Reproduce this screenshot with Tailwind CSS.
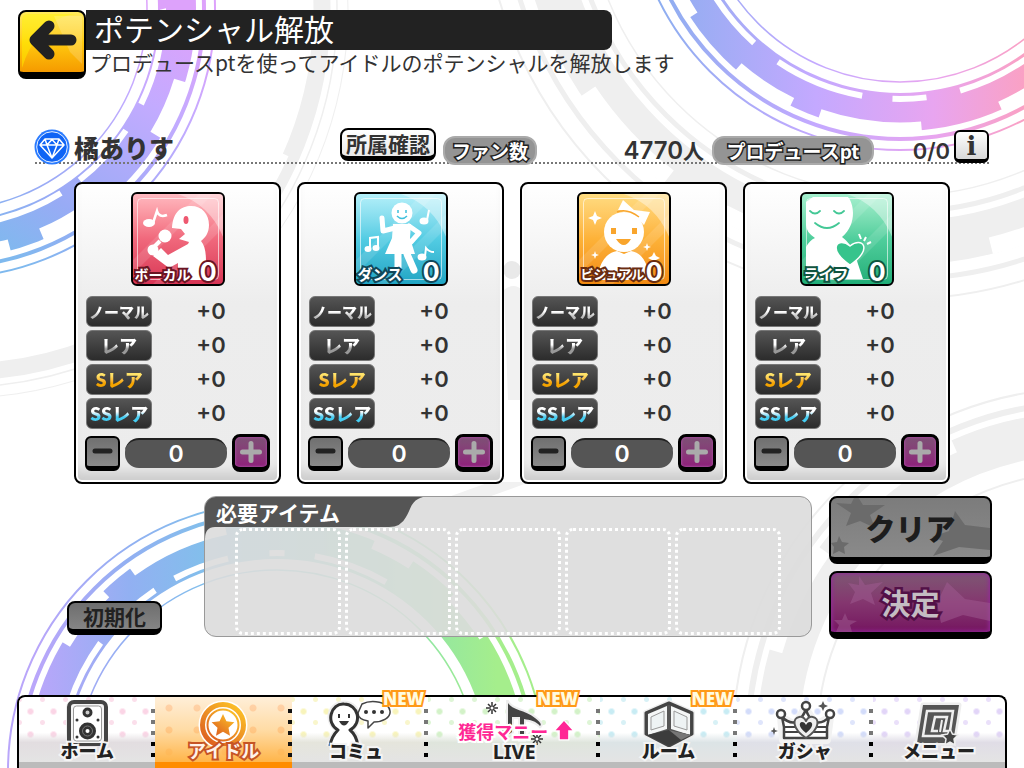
<!DOCTYPE html>
<html lang="ja">
<head>
    <meta charset="UTF-8">
    <meta name="viewport" content="width=device-width, initial-scale=1.0">
    <title>ポテンシャル解放</title>
    <script src="https://cdn.jsdelivr.net/npm/@tailwindcss/browser@4"></script>
</head>
<body class="relative flex min-h-screen flex-col overflow-hidden bg-white font-['Noto_Sans_CJK_JP',sans-serif] text-[#333]">

    <!-- Background rings -->
    <svg class="absolute inset-0 -z-0 h-full w-full" viewBox="0 0 1024 768" preserveAspectRatio="xMidYMax slice" fill="none" aria-hidden="true">
        <defs>
            <g id="ring">
                <circle r="201" stroke-width="1.5"/>
                <circle r="231" stroke-width="38"/>
                <circle r="258" stroke-width="4"/>
                <circle r="269" stroke-width="2"/>
            </g>
            <linearGradient id="gradTop" gradientUnits="userSpaceOnUse" x1="-240" y1="0" x2="150" y2="0">
                <stop offset="0" stop-color="#8eaef0"/>
                <stop offset="0.4" stop-color="#c4a9ff"/>
                <stop offset="0.7" stop-color="#e8a5f0"/>
                <stop offset="1" stop-color="#ffa0b8"/>
            </linearGradient>
            <linearGradient id="gradLeft" gradientUnits="userSpaceOnUse" x1="200" y1="-10" x2="50" y2="240">
                <stop offset="0" stop-color="#dda2fb"/>
                <stop offset="0.3" stop-color="#c3abff"/>
                <stop offset="0.75" stop-color="#98abf5"/>
                <stop offset="1" stop-color="#7fb9ee"/>
            </linearGradient>
            <linearGradient id="gradBottom" gradientUnits="userSpaceOnUse" x1="-240" y1="0" x2="220" y2="0">
                <stop offset="0" stop-color="#b9a6fa"/>
                <stop offset="0.2" stop-color="#92b0f2"/>
                <stop offset="0.4" stop-color="#7fc2ea"/>
                <stop offset="0.7" stop-color="#80dfb8"/>
                <stop offset="1" stop-color="#a5ee8c"/>
            </linearGradient>
        </defs>
        <!-- grey -->
        <g stroke="#efefef">
            <g transform="translate(-40 10)">
                <circle r="362" stroke-width="17"/>
                <circle r="388" stroke-width="1"/>
                <circle r="377" stroke-width="1.5"/>
                <circle r="356" stroke="#fff" stroke-width="7" pathLength="360" stroke-dasharray="0 24 18 12 14 292"/>
            </g>
            <g transform="translate(900 -119)">
                <circle r="315" stroke-width="1.5"/>
                <circle r="331" stroke-width="5"/>
                <circle r="362" stroke-width="44"/>
                <circle r="398" stroke-width="5"/>
                <circle r="418" stroke-width="2"/>
                <circle r="376" stroke="#fff" stroke-width="17" pathLength="360" stroke-dasharray="0 56 20 20 22 10 18 214"/>
            </g>
            <g transform="translate(1085 740)">
                <circle r="352" stroke-width="2"/>
                <circle r="337" stroke-width="6"/>
                <circle r="307" stroke-width="42"/>
                <circle r="268" stroke-width="2"/>
                <circle r="322" stroke="#fff" stroke-width="14" pathLength="360" stroke-dasharray="0 196 20 12 18 114"/>
            </g>
            <circle cx="512" cy="270" r="9" stroke="none" fill="#e9e9e9"/>
            <path d="M504 290Q514 282 522 290V400H508Z" stroke="none" fill="#f1f1f1"/>
            <path d="M440 500L490 482H530L480 500Z" stroke="none" fill="#f1f1f1"/>
        </g>
        <!-- coloured -->
        <g transform="translate(900 -119)">
            <use href="#ring" stroke="url(#gradTop)"/>
            <circle r="248" stroke="#fff" stroke-width="13" pathLength="360" stroke-dasharray="0 50 16 19 24 7 15 16 16 197"/>
            <circle r="218" stroke="#fff" stroke-width="6" pathLength="360" stroke-dasharray="0 38 36 9 9 8 24 8 22 206"/>
        </g>
        <g transform="translate(-54 9)">
            <use href="#ring" stroke="url(#gradLeft)"/>
            <circle r="245" stroke="#fff" stroke-width="13" pathLength="360" stroke-dasharray="0 17 14 24 12 8 8 277"/>
            <circle r="217" stroke="#fff" stroke-width="6" pathLength="360" stroke-dasharray="0 0 26 8 18 6 20 282"/>
        </g>
        <g transform="translate(277 771)">
            <use href="#ring" stroke="url(#gradBottom)"/>
            <circle r="248" stroke="#fff" stroke-width="13" pathLength="360" stroke-dasharray="0 211 15 8 24 35 10 12 12 33"/>
            <circle r="218" stroke="#fff" stroke-width="6" pathLength="360" stroke-dasharray="0 180 36 11 9 6 15 11 4 8 20 60"/>
        </g>
    </svg>

    <!-- Header -->
    <header class="relative flex items-start pt-[10px] pl-[18px]">
        <button type="button" aria-label="戻る" class="h-[69px] w-[68px] shrink-0 rounded-lg border-2 border-b-[7px] border-black bg-linear-to-b from-[#ffe95a] via-[#ffcb10] to-[#f59a00]">
            <svg viewBox="0 0 64 60" class="h-full w-full">
                <path d="M2 56V8Q2 2 8 2H56Q36 4 20 22Q8 36 2 56Z" fill="#fff600" opacity=".45"/>
                <path d="M34 4H62V52L50 40Z" fill="#fff" opacity=".18"/>
                <path d="M51 28H16M29 14L15 28L29 42" fill="none" stroke="#222" stroke-width="11" stroke-linecap="round" stroke-linejoin="round"/>
            </svg>
        </button>
        <div>
            <h1 class="h-10 w-[526px] rounded-r-lg bg-[#222] pl-2 text-[30px] leading-9 text-white">ポテンシャル解放</h1>
            <p class="pl-1 text-[21px] leading-6">プロデュースptを使ってアイドルのポテンシャルを解放します</p>
        </div>
    </header>

    <main class="relative flex flex-1 flex-col">
        <!-- Idol info -->
        <section class="mt-[49px] mr-[35px] ml-[35px] flex h-9 items-start border-b-2 border-dotted border-[#777]">
            <div class="flex flex-1 items-start gap-1">
                <svg viewBox="0 0 36 36" class="mt-px -ml-px size-9 shrink-0">
                    <circle cx="18" cy="18" r="17.5" fill="#2a7bff"/>
                    <circle cx="18" cy="18" r="15.3" fill="#0f64f5" stroke="#fff" stroke-width=".9"/>
                    <path d="M11 10H25L30 16L18 29L6 16ZM6 16H30M11 10L13 16L18 29L23 16L25 10M13 16L18 10.500L23 16" fill="none" stroke="#fff" stroke-width="1.500" stroke-linejoin="round"/>
                </svg>
                <h2 class="pt-[3px] text-[25px] leading-8 font-black">橘ありす</h2>
            </div>
            <button type="button" class="h-[33px] w-24 rounded-lg border-2 border-b-[5px] border-black bg-linear-to-b from-white to-[#e9e9e9] text-[21px] leading-6 font-bold whitespace-nowrap">所属確認</button>
            <span class="mt-2 ml-[7px] h-[29px] w-[94px] rounded-xl border-2 border-[#aaa] bg-[#949494] text-center text-[19px] leading-[26px] font-bold text-white [paint-order:stroke_fill] [-webkit-text-stroke:3px_#222]">ファン数</span>
            <span class="w-[175px] pt-[6px] pr-2 text-right text-[21px] leading-8 font-bold"><span class="font-['Inter'] text-[24px] font-semibold">4770</span>人</span>
            <span class="mt-2 h-[29px] w-[162px] rounded-xl border-2 border-[#aaa] bg-[#949494] text-center text-[19px] leading-[26px] font-bold text-white [paint-order:stroke_fill] [-webkit-text-stroke:3px_#222]">プロデュースpt</span>
            <span class="w-20 pt-[7px] pr-1 text-right font-['Inter'] text-[22px] leading-8 font-semibold">0/0</span>
            <button type="button" aria-label="情報" class="mt-[2px] h-[33px] w-[35px] rounded-md border-2 border-b-[4px] border-black bg-linear-to-b from-white to-[#d8d8d8] font-['DejaVu_Serif'] text-[26px] leading-7 font-bold">i</button>
        </section>

        <!-- Stat cards -->
        <section id="cards" class="mx-[74px] mt-[18px] grid grid-cols-4 gap-4"></section>

        <!-- Required items -->
        <section class="mt-3 flex items-start pr-8 pl-[67px]">
            <button type="button" class="mt-[105px] h-[34px] w-[95px] shrink-0 rounded-lg border-2 border-b-[6px] border-black bg-linear-to-b from-[#6e6e6e] to-[#858585] text-[21px] leading-6 font-bold text-[#222]">初期化</button>
            <div class="relative ml-[42px] h-[141px] flex-1 overflow-hidden rounded-xl border border-[#999] bg-[#dcdcdc]/90">
                <svg viewBox="0 0 224 44" class="absolute top-0 left-0 h-11 w-56">
                    <path d="M0 0H218C206 3 206 12 201 20Q196 30 184 30H10Q0 30 0 42Z" fill="#555"/>
                </svg>
                <h3 class="relative pl-[11px] text-[21px] leading-[31px] font-bold text-white">必要アイテム</h3>
                <div class="relative mr-[30px] ml-[30px] grid h-[107px] grid-cols-5 gap-1">
                    <div class="rounded-lg border-3 border-dotted border-white"></div>
                    <div class="rounded-lg border-3 border-dotted border-white"></div>
                    <div class="rounded-lg border-3 border-dotted border-white"></div>
                    <div class="rounded-lg border-3 border-dotted border-white"></div>
                    <div class="rounded-lg border-3 border-dotted border-white"></div>
                </div>
            </div>
            <div class="ml-[17px] flex w-[163px] shrink-0 flex-col gap-[7px]">
                <button type="button" class="relative h-[68px] overflow-hidden rounded-lg border-2 border-b-[7px] border-black bg-linear-to-b from-[#7c7c7c] to-[#8a8a8a]">
                    <svg viewBox="0 0 159 59" class="absolute inset-0 h-full w-full" fill="#6b6b6b">
                        <path d="M25 -4L32 7L54 7L39 17L44 30L29 23L15 28L20 15L5 5L20 6Z"/>
                        <path d="M124 13L134 27L159 30V52L128 49L102 58L112 43L101 39L118 33Z"/>
                        <path d="M8 38L11 44L18 45L13 49L14 56L8 53L2 56L3 49L0 45L6 44Z"/>
                    </svg>
                    <span class="relative text-[30px] leading-[59px] font-black text-[#1d1d1d]">クリア</span>
                </button>
                <button type="button" class="relative h-[68px] overflow-hidden rounded-lg border-2 border-b-[7px] border-black bg-linear-to-b from-[#7d5673] via-[#84366f] to-[#751460] shadow-[inset_0_0_4px_1px_#932a9b]">
                    <svg viewBox="0 0 159 59" class="absolute inset-0 h-full w-full" fill="#a05d92" opacity=".5">
                        <path d="M28 3L34 12L52 9L40 20L44 32L32 26L19 31L24 19L17 10L28 12Z"/>
                        <path d="M116 9L134 26L159 30V48L132 42L110 50L106 30Z"/>
                        <path d="M14 40L17 47L26 48L19 52L21 59H5L8 52L3 47L11 47Z"/>
                    </svg>
                    <span class="relative text-[29px] leading-[59px] font-bold text-[#c4bcc2] [paint-order:stroke_fill] [-webkit-text-stroke:5px_#521047]">決定</span>
                </button>
            </div>
        </section>
    </main>

    <!-- Bottom menu -->
    <nav class="relative mr-[17px] ml-[17px] flex h-[73px] rounded-t-lg border-2 border-b-0 border-black bg-white text-[18px] font-black text-[#222]">
        <a href="#" class="relative flex flex-1 flex-col items-center rounded-tl-md border-b-[6px] border-[#bbb] bg-[linear-gradient(#fff0_55%,#e2dde0_70%,#e4e4e4),radial-gradient(circle,#fbd5e6_2px,transparent_4px),radial-gradient(circle,#fbdfeb_2px,transparent_3px)] bg-size-[100%_100%,23px_23px,23px_23px] bg-position-[0_0,0_3px,12px_14px]">
            <svg viewBox="0 0 60 46" class="mt-[3px] h-[46px] w-[60px] shrink-0">
                <rect x="9" y="0" width="42" height="46" rx="8" fill="#eee"/>
                <rect x="12" y="2" width="37" height="43" rx="5" fill="#f4f4f4" stroke="#444" stroke-width="4"/>
                <rect x="16.500" y="6" width="28" height="35" rx="3" fill="#fff" stroke="#999" stroke-width="1"/>
                <circle cx="30.500" cy="12.500" r="3.500" fill="#ccc" stroke="#333" stroke-width="3"/>
                <circle cx="30.500" cy="31" r="8.500" fill="#333"/>
                <circle cx="30.500" cy="31" r="5" fill="none" stroke="#777"/>
                <circle cx="30.500" cy="31" r="2" fill="#fff"/>
                <g fill="#333"><circle cx="20" cy="20" r="1.500"/><circle cx="41" cy="20" r="1.500"/><circle cx="20" cy="37" r="1.500"/><circle cx="41" cy="37" r="1.500"/></g>
            </svg>
            <span class="relative -mt-2 leading-6 [paint-order:stroke_fill] [-webkit-text-stroke:4px_#f4f4f4]">ホーム</span>
            <svg viewBox="0 0 4 48" class="absolute top-3 right-0 h-12 w-1"><path d="M0 0h4v4H0zM0 11h4v4H0zM0 22h4v4H0z" fill="#777"/><path d="M0 33h4v4H0zM0 44h4v4H0z" fill="#000"/></svg>
        </a>
        <a href="#" aria-current="page" class="relative flex flex-1 flex-col items-center border-b-[6px] border-[#ff8c00] bg-[linear-gradient(#ffe6c5aa,#ffcf85bb_50%,#ffb54a),radial-gradient(circle,#ffb08a_3px,transparent_4px)] bg-size-[100%_100%,28px_22px]">
            <svg viewBox="0 0 60 46" class="mt-[3px] h-[46px] w-[60px] shrink-0">
                <defs><linearGradient id="coin" x1="1" y1="0" x2="0.200" y2="1"><stop offset="0" stop-color="#ffc928"/><stop offset="1" stop-color="#dd6020"/></linearGradient></defs>
                <circle cx="29" cy="25" r="24.500" fill="#fff"/>
                <circle cx="29" cy="25" r="20.500" fill="none" stroke="url(#coin)" stroke-width="5"/>
                <circle cx="29" cy="25" r="15.500" fill="none" stroke="url(#coin)" stroke-width="2"/>
                <path d="M29 14L32.400 21.300L40.400 22.300L34.500 27.800L36 35.700L29 31.800L22 35.700L23.500 27.800L17.600 22.300L25.600 21.300Z" fill="url(#coin)"/>
            </svg>
            <span class="relative -mt-2 leading-6 font-bold text-[#fff3ea] [paint-order:stroke_fill] [-webkit-text-stroke:4px_#c65424]">アイドル</span>
            <svg viewBox="0 0 4 48" class="absolute top-3 right-0 h-12 w-1"><path d="M0 0h4v4H0zM0 11h4v4H0zM0 22h4v4H0zM0 33h4v4H0zM0 44h4v4H0z" fill="#111"/></svg>
        </a>
        <a href="#" class="relative flex flex-1 flex-col items-center border-b-[6px] border-[#bbb] bg-[linear-gradient(#fff0_55%,#e5e5dc_70%,#e4e4e4),radial-gradient(circle,#f8f4bb_2px,transparent_4px),radial-gradient(circle,#f9f6cc_2px,transparent_3px)] bg-size-[100%_100%,23px_23px,23px_23px] bg-position-[0_0,0_3px,12px_14px]">
            <svg viewBox="0 0 68 46" class="mt-[3px] h-[46px] w-[68px] shrink-0" stroke-linejoin="round">
                <g fill="#fff" stroke="#eee" stroke-width="7"><circle cx="18" cy="17" r="13"/><path d="M4 46Q6 37 12 31H25Q31 37 33 46Z"/></g>
                <g fill="#fff" stroke="#333">
                    <path d="M36 4C46 -1 63 2 64 11C65 18 56 22 48 22L42 28L42 21C36 20 32 17 32 13Z" stroke="#444" stroke-width="1.500"/>
                    <path d="M4 46C5 38 8 34 12 30C-1 23 5 3 18 4C32 4 37 23 24 30C29 34 31 39 32 46" stroke-width="3"/>
                </g>
                <path d="M13 14v4M23 14v4" stroke="#333" stroke-width="2"/>
                <path d="M13 21H23Q18 30 13 21Z" fill="#333"/>
                <g fill="#333"><circle cx="40" cy="12" r="2"/><circle cx="48" cy="12" r="2"/><circle cx="56" cy="12" r="2"/></g>
            </svg>
            <span class="relative -mt-2 -ml-2 leading-6 [paint-order:stroke_fill] [-webkit-text-stroke:4px_#f4f4f4]">コミュ</span>
            <span class="absolute -top-2 right-1 font-['Open_Sans'] text-[17px] leading-5 font-extrabold text-[#fffbe0] [paint-order:stroke_fill] [-webkit-text-stroke:4px_#ff9a18] [stroke-linejoin:round]">NEW</span>
            <svg viewBox="0 0 4 48" class="absolute top-3 right-0 h-12 w-1"><path d="M0 0h4v4H0zM0 11h4v4H0zM0 22h4v4H0z" fill="#777"/><path d="M0 33h4v4H0zM0 44h4v4H0z" fill="#000"/></svg>
        </a>
        <a href="#" class="relative flex w-[172px] shrink-0 flex-col items-center border-b-[6px] border-[#bbb] bg-[linear-gradient(#fff0_55%,#dfe5dc_70%,#e4e4e4),radial-gradient(circle,#d3f2c8_2px,transparent_4px),radial-gradient(circle,#def5d6_2px,transparent_3px)] bg-size-[100%_100%,23px_23px,23px_23px] bg-position-[0_0,0_3px,12px_14px]">
            <svg viewBox="0 0 68 46" class="mt-[3px] h-[46px] w-[68px] shrink-0">
                <path d="M28 3C32 10 45 10 55 18C60 22 62 24 60 26C56 21 50 20 44 19V40H40V17H32V32C24 38 18 36 20 31C22 28 27 27 28 28Z" fill="#444" stroke="#eee" stroke-width="4" paint-order="stroke"/>
                <g stroke="#333" stroke-width="1.500">
                    <path d="M12 2V14M6 8H18M8 4L16 12M16 4L8 12"/>
                    <path d="M57 33V45M51 39H63M53 35L61 43M61 35L53 43"/>
                </g>
                <circle cx="12" cy="8" r="1.500" fill="#fff"/>
                <circle cx="57" cy="39" r="1.500" fill="#fff"/>
            </svg>
            <span class="relative -mt-1 font-['Noto_Sans'] text-[20px] leading-5 font-bold [paint-order:stroke_fill] [-webkit-text-stroke:4px_#f4f4f4]">LIVE</span>
            <span class="absolute top-6 left-[30px] flex items-center text-[18px] leading-5 font-bold whitespace-nowrap text-[#ff2894] [paint-order:stroke_fill] [-webkit-text-stroke:4px_#fff]">獲得マニー
                <svg viewBox="0 0 24 24" class="ml-1 h-5 w-6"><path d="M12 0L22 11H17V22H7V11H2Z" fill="#ff2894" stroke="#fff" stroke-width="3" paint-order="stroke"/></svg>
            </span>
            <span class="absolute -top-2 right-[22px] font-['Open_Sans'] text-[17px] leading-5 font-extrabold text-[#fffbe0] [paint-order:stroke_fill] [-webkit-text-stroke:4px_#ff9a18] [stroke-linejoin:round]">NEW</span>
            <svg viewBox="0 0 4 48" class="absolute top-3 right-0 h-12 w-1"><path d="M0 0h4v4H0zM0 11h4v4H0zM0 22h4v4H0z" fill="#777"/><path d="M0 33h4v4H0zM0 44h4v4H0z" fill="#000"/></svg>
        </a>
        <a href="#" class="relative flex flex-1 flex-col items-center border-b-[6px] border-[#bbb] bg-[linear-gradient(#fff0_55%,#dce4e6_70%,#e4e4e4),radial-gradient(circle,#c8ecf4_2px,transparent_4px),radial-gradient(circle,#d8f1f6_2px,transparent_3px)] bg-size-[100%_100%,23px_23px,23px_23px] bg-position-[0_0,0_3px,12px_14px]">
            <svg viewBox="0 0 60 48" class="mt-[3px] h-12 w-[60px] shrink-0" stroke-linejoin="round">
                <path d="M31 3L54 13V34L31 46L8 34V13Z" fill="#555" stroke="#eee" stroke-width="6"/>
                <path d="M31 3L54 13V34L31 46L8 34V13Z" fill="#555" stroke="#444" stroke-width="3"/>
                <path d="M29 6V29L10 35V14ZM33 6V29L52 35V14Z" fill="#f4f6f6"/>
                <path d="M26 11V26L13 30V17ZM36 11V26L49 30V17Z" fill="#eef3f4" stroke="#999" stroke-width="1"/>
                <path d="M31 30L53 35L31 46L9 35Z" fill="#3c3c3c"/>
                <path d="M31 30L53 35L43 40Z" fill="#777"/>
            </svg>
            <span class="relative -mt-2.5 leading-6 [paint-order:stroke_fill] [-webkit-text-stroke:4px_#f4f4f4]">ルーム</span>
            <span class="absolute -top-2 right-1 font-['Open_Sans'] text-[17px] leading-5 font-extrabold text-[#fffbe0] [paint-order:stroke_fill] [-webkit-text-stroke:4px_#ff9a18] [stroke-linejoin:round]">NEW</span>
            <svg viewBox="0 0 4 48" class="absolute top-3 right-0 h-12 w-1"><path d="M0 0h4v4H0zM0 11h4v4H0zM0 22h4v4H0z" fill="#777"/><path d="M0 33h4v4H0zM0 44h4v4H0z" fill="#000"/></svg>
        </a>
        <a href="#" class="relative flex flex-1 flex-col items-center border-b-[6px] border-[#bbb] bg-[linear-gradient(#fff0_55%,#dfe0e8_70%,#e4e4e4),radial-gradient(circle,#d3dcfa_2px,transparent_4px),radial-gradient(circle,#dfe5fb_2px,transparent_3px)] bg-size-[100%_100%,23px_23px,23px_23px] bg-position-[0_0,0_3px,12px_14px]">
            <svg viewBox="0 0 68 46" class="mt-[3px] h-[46px] w-[68px] shrink-0" stroke-linejoin="round">
                <path d="M12 40L10 17L24 25L34 8L45 25L59 17L56 40Z" fill="#f2f2f2" stroke="#f2f2f2" stroke-width="8"/>
                <path d="M13 38V27L11 17Q18 24 25 22Q32 18 35 9Q37 18 44 22Q52 24 58 17L56 27V38Z" fill="#fff" stroke="#444" stroke-width="2.500"/>
                <path d="M13 27H56M12 32H57" stroke="#444" stroke-width="2"/>
                <g fill="#fff" stroke="#444" stroke-width="2.500"><circle cx="10" cy="14" r="4"/><circle cx="35" cy="6" r="4"/><circle cx="59" cy="14" r="4"/></g>
                <path d="M35 38C20 28 22 18 28 17C32 16 34 19 35 21C36 19 38 16 42 17C48 18 50 28 35 38Z" fill="#eee" stroke="#555" stroke-width="2"/>
                <path d="M35 33C27 27 28 22 31 22C33 22 34 23 35 25C36 23 37 22 39 22C42 22 43 27 35 33Z" fill="#333"/>
                <path d="M52 1L53.500 4.500L57 6L53.500 7.500L52 11L50.500 7.500L47 6L50.500 4.500ZM3 27L4 30L7 31L4 32L3 35L2 32L-1 31L2 30Z" fill="#555"/>
            </svg>
            <span class="relative -mt-2 leading-6 [paint-order:stroke_fill] [-webkit-text-stroke:4px_#f4f4f4]">ガシャ</span>
            <svg viewBox="0 0 4 48" class="absolute top-3 right-0 h-12 w-1"><path d="M0 0h4v4H0zM0 11h4v4H0zM0 22h4v4H0z" fill="#777"/><path d="M0 33h4v4H0zM0 44h4v4H0z" fill="#000"/></svg>
        </a>
        <a href="#" class="relative flex w-[132px] shrink-0 flex-col items-center rounded-tr-md border-b-[6px] border-[#bbb] bg-[linear-gradient(#fff0_55%,#e0dde6_70%,#e4e4e4),radial-gradient(circle,#e2d5f8_2px,transparent_4px),radial-gradient(circle,#eae0fa_2px,transparent_3px)] bg-size-[100%_100%,23px_23px,23px_23px] bg-position-[0_0,0_3px,12px_14px]">
            <svg viewBox="0 0 60 46" class="mt-[3px] h-[46px] w-[60px] shrink-0">
                <path d="M14 5H50L44 43H8Z" fill="#555" stroke="#eee" stroke-width="5" stroke-linejoin="round" paint-order="stroke"/>
                <path d="M38 36H14L18 11H44L41 31H35L38 17H26L23 31H29" fill="none" stroke="#eee" stroke-width="2.500"/>
                <path d="M33 20L31 32" stroke="#eee" stroke-width="2"/>
                <path d="M41 29L43.500 34L49 35L45 39L46 45L41 42L36 45L37 39L33 35L38.500 34Z" fill="#444" stroke="#eee" stroke-width="1.500"/>
            </svg>
            <span class="relative -mt-2 leading-6 [paint-order:stroke_fill] [-webkit-text-stroke:4px_#f4f4f4]">メニュー</span>
        </a>
    </nav>

    <script>
        const stats = [
            {
                name: 'ボーカル',
                tile: 'from-[#ffb9c0] via-[#f0687c] to-[#d83455]',
                stroke: '[-webkit-text-stroke:4px_#6b1423]',
                size: 'text-[14px]',
                art: `
                    <path d="M41 36C42 20 50 14 60 14C71 14 78 22 78 33C78 41 74 46 70 49C74 54 75 60 75 70V88H47V71L38 76L22 64L30 56L37 63L57 52L58 50L48 47L54 42L50 37Z"/>
                    <circle cx="34" cy="44" r="6.500"/><path d="M29 49L20 58" stroke="#fff" stroke-width="4"/><circle cx="22" cy="58" r="5.500"/>
                    <ellipse cx="55" cy="28" rx="2.500" ry="4" fill="#ee5870"/>
                    <ellipse cx="18" cy="31" rx="6" ry="4"/><path d="M22 31L26 19Q28 26 36 23" fill="none" stroke="#fff" stroke-width="2.500"/>`
            },
            {
                name: 'ダンス',
                tile: 'from-[#b4f0fa] via-[#52cce3] to-[#1fa5c4]',
                stroke: '[-webkit-text-stroke:4px_#10485a]',
                size: 'text-[15px]',
                art: `
                    <circle cx="48" cy="21" r="10.500"/>
                    <path d="M39 32H57L56 46L61 62H31L38 46Z"/>
                    <g fill="none" stroke="#fff" stroke-width="5" stroke-linecap="round" stroke-linejoin="round"><path d="M28 26L29 39L41 36M55 34L65 41L57 50"/><path d="M44 62V76M53 62L60 78" stroke-width="7"/></g>
                    <path d="M44 18v3M52 18v3M43 24Q48 29 53 24" fill="none" stroke="#3fc0dc" stroke-width="1.500"/>
                    <ellipse cx="70" cy="29" rx="4.500" ry="3.500"/><ellipse cx="14" cy="57" rx="3.500" ry="3"/><ellipse cx="22" cy="56" rx="3.500" ry="3"/><ellipse cx="68" cy="65" rx="4.500" ry="3.500"/>
                    <path d="M73 28L75 18M16 56V46L24 45V55M71 64L72 56Q75 60 80 60" fill="none" stroke="#fff" stroke-width="2"/>`
            },
            {
                name: 'ビジュアル',
                tile: 'from-[#ffdc80] via-[#fdb238] to-[#f28a10]',
                stroke: '[-webkit-text-stroke:4px_#6a2c10]',
                size: 'text-[13px]',
                art: `
                    <circle cx="47" cy="40" r="20"/><path d="M23 75Q28 61 40 59L47 62L54 59Q66 61 70 75V88H23Z"/>
                    <path d="M41 18L46 8L57 18L73 20L67 33L56 22Z"/>
                    <path d="M40 20Q50 16 62 25" fill="none" stroke="#f9a52c" stroke-width="1.500"/>
                    <path d="M34 36h5v6h-5zM55 36h5v6h-5zM39 47H54Q47 59 39 47Z" fill="#f9a52c"/>
                    <path d="M18 19L20 24L25 26L20 28L18 33L16 28L11 26L16 24ZM18 59L19 62L22 63L19 64L18 67L17 64L14 63L17 62ZM70 51L71 54L74 55L71 56L70 59L69 56L66 55L69 54ZM77 60L79 64L83 66L79 68H75L71 66L75 64Z"/>`
            },
            {
                name: 'ライフ',
                tile: 'from-[#a5f0cf] via-[#4fce9c] to-[#1fae78]',
                stroke: '[-webkit-text-stroke:4px_#0f5540]',
                size: 'text-[15px]',
                art: `
                    <path d="M13 5H48C55 13 56 34 42 45C46 48 50 52 54 60L63 87H6V55Q10 48 15 46Q6 40 6 33V10Z"/>
                    <path d="M10 19Q15 24 20 19M34 19Q39 24 44 19M15 31Q27 41 39 31" fill="none" stroke="#44c896" stroke-width="1.800" stroke-linecap="round"/>
                    <path d="M50 73C26 57 38 44 50 54C62 44 74 57 50 73Z" fill="#36c48c" stroke="#fff" stroke-width="1.500"/>
                    <path d="M59 42L61 47M66 45L64 49M71 50L67 52" stroke="#fff" stroke-width="2"/>`
            }
        ];

        const ranks = [
            { name: 'ノーマル', size: 'text-[15px]', color: 'from-white from-50% to-[#bbb] to-75%' },
            { name: 'レア', size: 'text-[18px]', color: 'from-white from-50% to-[#999] to-65%' },
            { name: 'Sレア', size: 'text-[18px]', color: 'from-[#ffe36a] from-35% to-[#f5a400] to-65%' },
            { name: 'SSレア', size: 'text-[18px]', color: 'from-white from-45% to-[#45cdf2] to-65%' }
        ];

        const rankRow = rank => `
            <div class="flex h-[31px] items-center">
                <dt class="h-[31px] w-[66px] rounded-md border border-[#777] bg-linear-to-b from-[#555] to-[#2c2c2c] text-center leading-[29px]">
                    <span class="bg-linear-to-b ${rank.color} bg-clip-text ${rank.size} font-black whitespace-nowrap text-transparent">${rank.name}</span>
                </dt>
                <dd class="flex-1 text-center font-['Inter'] text-[22px] font-semibold">+0</dd>
            </div>`;

        document.getElementById('cards').innerHTML = stats.map(stat => `
            <article class="flex h-[302px] flex-col items-center rounded-lg border-2 border-black bg-linear-to-b from-white via-[#ededed] via-40% to-[#ececec] px-[9px] pt-2 shadow-[inset_0_0_0_2px_#fff,inset_0_-16px_12px_-6px_#ccc]">
                <div class="relative size-[94px] overflow-hidden rounded-md border-2 border-black bg-linear-to-b ${stat.tile}">
                    <svg viewBox="2 2 90 90" class="absolute inset-0 h-full w-full" fill="#fff">
                        <path d="M0 70L70 0H84L0 84ZM20 94L94 20V34L34 94Z" opacity=".12"/>
                        <path d="M40 0H94V50Q80 10 40 0Z" opacity=".4"/>
                        <rect x="6.500" y="6.500" width="81" height="81" rx="4" fill="none" stroke="#fff" stroke-opacity=".6"/>
                        ${stat.art}
                    </svg>
                    <h3 class="absolute bottom-0 left-[2px] ${stat.size} leading-5 font-bold whitespace-nowrap text-white [paint-order:stroke_fill] ${stat.stroke}">${stat.name}</h3>
                    <span class="absolute right-[6px] bottom-0 font-['Inter'] text-[25px] leading-6 font-bold text-white [paint-order:stroke_fill] ${stat.stroke}">0</span>
                </div>
                <dl class="mt-[10px] flex w-full flex-col gap-[3px] pl-px">${ranks.map(rankRow).join('')}</dl>
                <div class="mt-[5px] flex w-full items-center justify-between">
                    <button type="button" aria-label="${stat.name}を減らす" class="h-[35px] w-[35px] rounded-md border-2 border-b-[5px] border-black bg-linear-to-b from-[#707070] to-[#8a8a8a]">
                        <svg viewBox="0 0 31 28" class="h-full w-full"><path d="M8 13H23" stroke="#222" stroke-width="5" stroke-linecap="round"/></svg>
                    </button>
                    <output class="h-[30px] w-[102px] rounded-[14px] border-t-2 border-[#222] bg-[#555] text-center font-['Inter'] text-[23px] leading-[29px] font-semibold text-white">0</output>
                    <button type="button" aria-label="${stat.name}を増やす" class="h-[38px] w-[38px] rounded-lg border-[3px] border-b-[5px] border-black bg-linear-to-b from-[#7d5075] to-[#8f1d7b] shadow-[inset_0_0_2px_1px_#a04a98]">
                        <svg viewBox="0 0 32 30" class="h-full w-full"><path d="M7.500 15H24.500M16 6.500V23.500" stroke="#aaa" stroke-width="5" stroke-linecap="round"/></svg>
                    </button>
                </div>
            </article>`).join('');
    </script>
</body>
</html>
